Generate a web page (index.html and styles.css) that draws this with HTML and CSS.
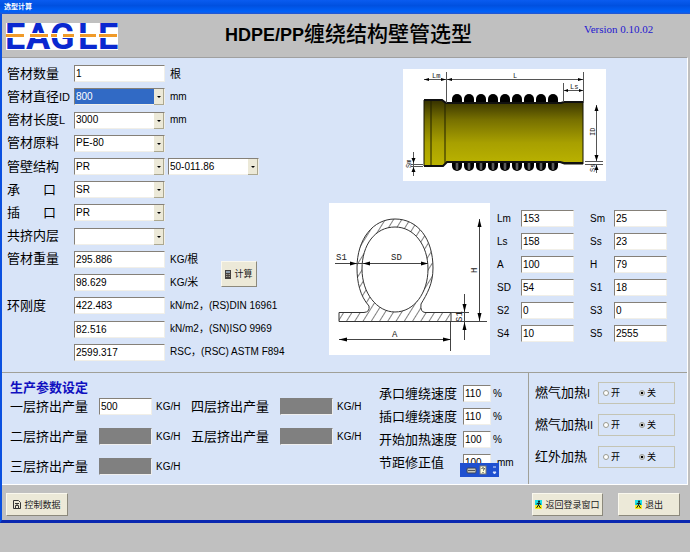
FILE: index.html
```html
<!DOCTYPE html>
<html lang="zh-CN">
<head>
<meta charset="utf-8">
<title>选型计算</title>
<link rel="stylesheet" href="styles.css">
</head>
<body>
<div class="window">
  <div class="titlebar">选型计算</div>
  <header class="header">
    <svg class="logo" viewBox="0 0 112 27" role="img" aria-label="EAGLE">
      <rect width="112" height="27" fill="#fff"/>
      <g class="logo-text">
        <text x="-1" y="26">E</text><text x="20" y="26">A</text><text x="44" y="26">G</text><text x="72" y="26">L</text><text x="92" y="26">E</text>
      </g>
      <rect y="10" width="112" height="5" fill="#fff"/>
      <g fill="#f09a28"><rect y="11" width="18" height="3"/><rect x="24" y="11" width="18" height="3"/><rect x="45" y="11" width="6" height="3"/><rect x="57" y="11" width="11" height="3"/><rect x="74" y="11" width="16" height="3"/><rect x="93" y="11" width="18" height="3"/></g>
    </svg>
    <h1 class="title">HDPE/PP<span class="title-cn">缠绕结构壁管选型</span></h1>
    <div class="version">Version 0.10.02</div>
  </header>

  <main class="panel">
    <section class="upper">
      <div class="specs">
        <label class="name" for="qty">管材数量</label><input id="qty" class="field" value="1"><span class="unit cn">根</span>
        <label class="name" for="dia">管材直径<span class="latin">ID</span></label><span class="combo active"><select id="dia"><option>800</option></select></span><span class="unit">mm</span>
        <label class="name" for="len">管材长度<span class="latin">L</span></label><span class="combo"><select id="len"><option>3000</option></select></span><span class="unit">mm</span>
        <label class="name" for="mat">管材原料</label><span class="combo"><select id="mat"><option>PE-80</option></select></span><span class="unit"></span>
        <label class="name" for="wall">管壁结构</label><span class="combo"><select id="wall"><option>PR</option></select></span><span class="combo extra"><select aria-label="管壁型号"><option>50-011.86</option></select></span>
        <label class="name spread" for="socket"><span>承</span><span>口</span></label><span class="combo"><select id="socket"><option>SR</option></select></span><span class="unit"></span>
        <label class="name spread" for="spigot"><span>插</span><span>口</span></label><span class="combo"><select id="spigot"><option>PR</option></select></span><span class="unit"></span>
        <label class="name" for="inner">共挤内层</label><span class="combo"><select id="inner"><option></option></select></span><span class="unit"></span>
        <label class="name" for="w1">管材重量</label><input id="w1" class="field" value="295.886"><span class="unit short">KG/<span class="cn">根</span></span>
        <button class="btn calc" type="button">
          <svg width="6" height="9" viewBox="0 0 6 9"><rect width="6" height="9" fill="#45413e"/><rect x="1" y="1" width="4" height="2" fill="#8f9fae"/><path d="M1 4.500h4M1 6.500h4" stroke="#a59d90" stroke-dasharray="1 .5"/></svg>计算</button>
        <span></span><input class="field" aria-label="每米重量" value="98.629"><span class="unit short">KG/<span class="cn">米</span></span>
        <label class="name" for="r1">环刚度</label><input id="r1" class="field" value="422.483"><span class="unit">kN/m2，(RS)DIN 16961</span>
        <span></span><input class="field" aria-label="ISO 9969" value="82.516"><span class="unit">kN/m2，(SN)ISO 9969</span>
        <span></span><input class="field" aria-label="ASTM F894" value="2599.317"><span class="unit">RSC，(RSC) ASTM F894</span>
      </div>

      <div class="visuals">
        <svg class="pipe" viewBox="0 0 203 112" role="img" aria-label="管材外形图">
          <defs>
            <linearGradient id="body" x1="0" y1="0" x2="0" y2="1"><stop offset="0" stop-color="#343000"/><stop offset=".3" stop-color="#777000"/><stop offset=".65" stop-color="#a8a000"/><stop offset="1" stop-color="#bcb400"/></linearGradient>
            <linearGradient id="knob" x1="0" y1="0" x2="1" y2="0"><stop offset="0" stop-color="#000"/><stop offset=".5" stop-color="#777"/><stop offset="1" stop-color="#000"/></linearGradient>
            <g id="rib"><rect x="-5" y="25" width="10" height="15" rx="5" fill="#000"/><rect x="-5" y="88" width="10" height="14" rx="5" fill="#000"/><rect x="-2" y="93" width="4" height="8" rx="2" fill="url(#knob)"/></g>
          </defs>
          <rect width="203" height="112" fill="#fff"/>
          <use href="#rib" x="54"/><use href="#rib" x="66"/><use href="#rib" x="78"/><use href="#rib" x="90"/><use href="#rib" x="102"/><use href="#rib" x="114"/><use href="#rib" x="126"/><use href="#rib" x="138"/><use href="#rib" x="150"/>
          <path d="M21 31H39L43 34H158L161 33H180V95H161L157 93H44L40 97H21Z" fill="url(#body)" stroke="#151505"/>
          <path d="M21 31H39L43 34H158L161 33H180M21 97H40L44 93H157L161 94H180" fill="none" stroke="#111" stroke-width="2"/>
          <path d="M28 32V96M42 34V94" stroke="#202000"/>
          <path d="M21 10.500H180M43.500 3V34M180.500 3V34M160.500 14V33M160 21.500H180M193.500 36V92M182 92.500H200M182 95.500H200M193.500 96V104M10.500 83V107M8 95.500H20M8 97.500H20" stroke="#555" fill="none"/>
          <g fill="#000"><path d="M21 10.500l5-1.500v3zM43 10.500l-5-1.500v3zM44 10.500l5-1.500v3zM180 10.500l-5-1.500v3zM161 21.500l4-1.500v3zM180 21.500l-4-1.500v3zM193.500 36l-2 6h4zM193.500 92l-2-6h4zM193.500 96l-2 5h4zM10.500 94l-2-5h4zM10.500 98l-2 5h4z"/></g>
          <g class="dim small"><text x="29" y="9">Lm</text><text x="110" y="9">L</text><text x="167" y="20">Ls</text><text transform="translate(192 67) rotate(-90)">ID</text><text transform="translate(8 99) rotate(-90)">Sm</text><text transform="translate(192 103) rotate(-90)">Ss</text></g>
        </svg>

        <div class="detail">
          <svg class="section" viewBox="0 0 161 152" role="img" aria-label="管壁截面图">
            <defs><pattern id="hatch" width="7" height="7" patternUnits="userSpaceOnUse" patternTransform="rotate(32)"><path d="M0 0V7" stroke="#555" stroke-width="1.500"/></pattern></defs>
            <rect width="161" height="152" fill="#fff"/>
            <path fill-rule="evenodd" fill="url(#hatch)" stroke="#333" d="M10 109.500H35Q41 109 40 103C31 93 28 79 28 65C28 36 44 16 66 16C89 16 104 36 104 65C104 81 98 91 92 101Q91 109 96 109.500H122V118.500H10ZM66 24C46 24 33 42 33 66C33 90 48 109 66 109C85 109 99 90 99 66C99 42 85 24 66 24Z"/>
            <path d="M6 60.500H99M10 136.500H122M121.500 119V148M122 109.500H140M122 118.500H158M150.500 16V118M135.500 91V137" stroke="#444" fill="none"/>
            <g fill="#000"><path d="M28 60.500l-7-2v4zM34 60.500l7-2v4zM99 60.500l-7-2v4zM10 136.500l8-2v4zM122 136.500l-8-2v4zM150.500 16l-2 8h4zM150.500 118l-2-8h4zM135.500 109l-2-8h4zM135.500 119l-2 8h4z"/></g>
            <g class="dim"><text x="7" y="57">S1</text><text x="62" y="57">SD</text><text x="63" y="134">A</text><text transform="translate(148 70) rotate(-90)">H</text><text transform="translate(133 119) rotate(-90)">S1</text></g>
          </svg>
          <div class="params">
            <label for="p1">Lm</label><input id="p1" class="field" value="153"><label for="p2">Sm</label><input id="p2" class="field" value="25">
            <label for="p3">Ls</label><input id="p3" class="field" value="158"><label for="p4">Ss</label><input id="p4" class="field" value="23">
            <label for="p5">A</label><input id="p5" class="field" value="100"><label for="p6">H</label><input id="p6" class="field" value="79">
            <label for="p7">SD</label><input id="p7" class="field" value="54"><label for="p8">S1</label><input id="p8" class="field" value="18">
            <label for="p9">S2</label><input id="p9" class="field" value="0"><label for="p10">S3</label><input id="p10" class="field" value="0">
            <label for="p11">S4</label><input id="p11" class="field" value="10"><label for="p12">S5</label><input id="p12" class="field" value="2555">
          </div>
        </div>
      </div>
    </section>

    <section class="lower">
      <div class="output">
        <h2 class="heading">生产参数设定</h2>
        <div class="layers">
          <label class="name" for="o1">一层挤出产量</label><input id="o1" class="field" value="500"><span>KG/H</span>
          <label class="name" for="o4">四层挤出产量</label><input id="o4" class="field" disabled><span>KG/H</span>
          <label class="name" for="o2">二层挤出产量</label><input id="o2" class="field" disabled><span>KG/H</span>
          <label class="name" for="o5">五层挤出产量</label><input id="o5" class="field" disabled><span>KG/H</span>
          <label class="name" for="o3">三层挤出产量</label><input id="o3" class="field" disabled><span>KG/H</span>
        </div>
      </div>
      <div class="speeds">
        <label class="name" for="s1">承口缠绕速度</label><input id="s1" class="field" value="110"><span>%</span>
        <label class="name" for="s2">插口缠绕速度</label><input id="s2" class="field" value="110"><span>%</span>
        <label class="name" for="s3">开始加热速度</label><input id="s3" class="field" value="100"><span>%</span>
        <label class="name" for="s4">节距修正值</label><input id="s4" class="field" value="100"><span class="mm">mm</span>
        <svg class="langbar" viewBox="0 0 39 14" aria-hidden="true">
          <rect width="39" height="14" fill="#1f50d0"/>
          <rect x="7" y="5" width="9" height="5" rx="1" fill="#c8c8bd" stroke="#39455d"/><path d="M8 7.500h7" stroke="#555"/>
          <rect x="20" y="3" width="6" height="8" fill="#ffffdc" stroke="#777"/><path d="M21.500 5.500q1.500-1.500 3 0q0 1-1.500 2M23 9v1" fill="none" stroke="#333"/>
          <path d="M33 4h3M33 9h3l-1.500 2z" stroke="#dce5ff" fill="#dce5ff"/>
        </svg>
      </div>
      <div class="heating">
        <div class="heat-row"><span class="name">燃气加热<span class="latin">I</span></span><div class="choice" role="radiogroup" aria-label="燃气加热I"><label><input type="radio" name="h1">开</label><label><input type="radio" name="h1" checked>关</label></div></div>
        <div class="heat-row"><span class="name">燃气加热<span class="latin">II</span></span><div class="choice" role="radiogroup" aria-label="燃气加热II"><label><input type="radio" name="h2">开</label><label><input type="radio" name="h2" checked>关</label></div></div>
        <div class="heat-row"><span class="name">红外加热</span><div class="choice" role="radiogroup" aria-label="红外加热"><label><input type="radio" name="h3">开</label><label><input type="radio" name="h3" checked>关</label></div></div>
      </div>
    </section>
  </main>

  <footer class="footer">
    <button class="btn data" type="button"><svg width="8" height="9" viewBox="0 0 8 9"><path d="M.5.500h5l2 2v6h-7zM2 3.500h4M4 3v3M2.500 8V5.500h3V8" fill="none" stroke="#333"/></svg>控制数据</button>
    <button class="btn back" type="button"><svg width="7" height="9" viewBox="0 0 7 9"><rect width="7" height="5" fill="#19dfe8"/><rect y="5" width="7" height="4" fill="#f5ee20"/><circle cx="4" cy="1.500" r="1" fill="#111"/><path d="M4 2.500L3.500 5L5.500 8M3.500 5L1.500 8M1.500 4L4 3L6 4.500" fill="none" stroke="#111"/></svg>返回登录窗口</button>
    <button class="btn exit" type="button"><svg width="7" height="9" viewBox="0 0 7 9"><rect width="7" height="5" fill="#19dfe8"/><rect y="5" width="7" height="4" fill="#f5ee20"/><circle cx="4" cy="1.500" r="1" fill="#111"/><path d="M4 2.500L3.500 5L5.500 8M3.500 5L1.500 8M1.500 4L4 3L6 4.500" fill="none" stroke="#111"/></svg>退出</button>
  </footer>
</div>
</body>
</html>
```
FILE: styles.css
```css
* { box-sizing: border-box; }

body {
  margin: 0;
  background: #c0c0c0;
  color: #000;
  font: 10px/12px "Liberation Sans", "Noto Sans CJK SC", sans-serif;
}

h1, h2 { margin: 0; font-weight: normal; }

.window {
  border-left: 2px solid #0a50e0;
  border-bottom: 3px solid #0a28b0;
}

.titlebar {
  height: 14px;
  margin-left: -2px;
  padding-left: 4px;
  background: linear-gradient(#0a5cf0, #0050e0 40%, #0062fa 85%, #2a55c8);
  color: #fff;
  font-size: 7px;
  line-height: 13px;
  font-weight: bold;
}

.header {
  display: grid;
  grid-template-columns: 219px 1fr 106px;
  align-items: start;
  height: 43px;
  padding: 9px 0 0 4px;
}

.logo { width: 112px; height: 27px; overflow: visible; }
.logo-text { font: 700 36px Roboto, sans-serif; fill: #0a28d0; }

.title {
  font-size: 18px;
  line-height: 22px;
  font-weight: bold;
}
.title-cn { font-size: 21px; font-weight: 500; }

.version {
  color: #2418d0;
  font: 11px/13px "Liberation Serif", serif;
}

.panel {
  margin-right: 2px;
  border-top: 1px solid #a0a0a0;
  border-right: 1px solid #fff;
  border-bottom: 1px solid #fff;
  background: #d8e4f8;
}

.upper {
  display: flex;
  height: 315px;
  border-bottom: 1px solid #a0a098;
}

.specs {
  flex: none;
  display: grid;
  grid-template-columns: 67px 91px 56px 1fr;
  grid-template-rows: repeat(13, 1fr);
  align-items: center;
  width: 327px;
  height: 302px;
  margin-top: 4px;
  padding-left: 5px;
}

.name { font-size: 13px; line-height: 16px; white-space: nowrap; }
.latin { font-size: 11px; }
.spread { display: flex; justify-content: space-between; width: 49px; }

.unit { grid-column: 3 / -1; padding-left: 5px; white-space: nowrap; }
.unit.short { grid-column: 3; }
.cn { font-size: 11px; }

.field, .combo select {
  width: 100%;
  height: 17px;
  border: 1px solid;
  border-color: #858078 #f1efe8 #f1efe8 #858078;
  border-radius: 0;
  padding: 0 1px;
  background: #fff;
  color: #000;
  font: inherit;
}
.field:disabled { background: #808080; border-color: #808080 #eee #eee #808080; }

.combo { position: relative; width: 91px; }
.combo.extra { grid-column: 3 / -1; margin-left: 3px; }
.combo select { display: block; appearance: none; }
.combo::before {
  content: "";
  position: absolute;
  top: 1px;
  right: 1px;
  width: 9px;
  height: 15px;
  background: #ece9d8;
  border-right: 1px solid #aca890;
  border-bottom: 1px solid #aca890;
  pointer-events: none;
}
.combo::after {
  content: "";
  position: absolute;
  top: 8px;
  right: 4px;
  border: 2px solid transparent;
  border-top-color: #000;
  border-bottom: 0;
  pointer-events: none;
}
.combo.active select { background: #316ac5; color: #fff; }

.btn {
  display: flex;
  align-items: center;
  justify-content: center;
  gap: 3px;
  height: 23px;
  padding: 0;
  border: 1px solid;
  border-color: #faf8ee #8c897c #8c897c #faf8ee;
  background: #ece9d8;
  color: #222;
  font: 9px/12px "Liberation Sans", "Noto Sans CJK SC", sans-serif;
  white-space: nowrap;
}

.calc {
  grid-column: 4;
  grid-row: 9 / span 2;
  width: 36px;
  height: 26px;
  margin-top: 6px;
}

.visuals { flex: 1; }

.pipe {
  display: block;
  width: 203px;
  height: 112px;
  margin: 11px 0 0 74px;
}
.dim { font: 9px "Liberation Mono", monospace; fill: #222; }
.small { font-size: 7px; }

.detail {
  display: flex;
  align-items: flex-start;
  gap: 7px;
  margin-top: 22px;
}
.section { flex: none; width: 161px; height: 152px; }

.params {
  display: grid;
  grid-template-columns: 24px 69px 24px 53px;
  row-gap: 6px;
  margin-top: 7px;
  align-items: center;
}
.params .field { width: 53px; }

.lower { display: flex; height: 111px; }

.output { width: 377px; padding: 7px 0 0 8px; }
.heading { color: #1010c0; font-size: 13px; line-height: 16px; font-weight: bold; }

.layers {
  display: grid;
  grid-template-columns: 89px 57px 35px 89px 57px auto;
  row-gap: 13px;
  align-items: center;
  margin-top: 2px;
}
.layers .field { width: 53px; }

.speeds {
  position: relative;
  display: grid;
  grid-template-columns: 84px 30px auto;
  grid-auto-rows: 17px;
  row-gap: 6px;
  align-content: start;
  align-items: center;
  width: 149px;
  padding-top: 12px;
}
.speeds .field { width: 28px; }
.mm { margin-left: 4px; }

.langbar {
  position: absolute;
  left: 81px;
  top: 90px;
  width: 39px;
  height: 14px;
}

.heating {
  flex: 1;
  display: flex;
  flex-direction: column;
  gap: 10px;
  padding: 9px 0 0 6px;
  border-left: 1px solid #a0a098;
}
.heat-row { display: flex; align-items: center; }
.heat-row .name { width: 63px; }

.choice {
  display: flex;
  align-items: center;
  gap: 19px;
  width: 77px;
  height: 22px;
  padding-left: 4px;
  border: 1px solid #c4c4b4;
  font-size: 9px;
}
.choice label { display: flex; align-items: center; gap: 2px; }
.choice input {
  appearance: none;
  width: 6px;
  height: 6px;
  margin: 0;
  border: 1px solid #9a9a90;
  border-radius: 50%;
  background: #fff;
}
.choice input:checked { background: radial-gradient(#000 40%, #fff 60%); }

.footer {
  display: flex;
  height: 35px;
  padding: 8px 10px 0 4px;
}
.data { width: 62px; margin-right: auto; }
.back { width: 71px; margin-right: 15px; }
.exit { width: 62px; }
```
